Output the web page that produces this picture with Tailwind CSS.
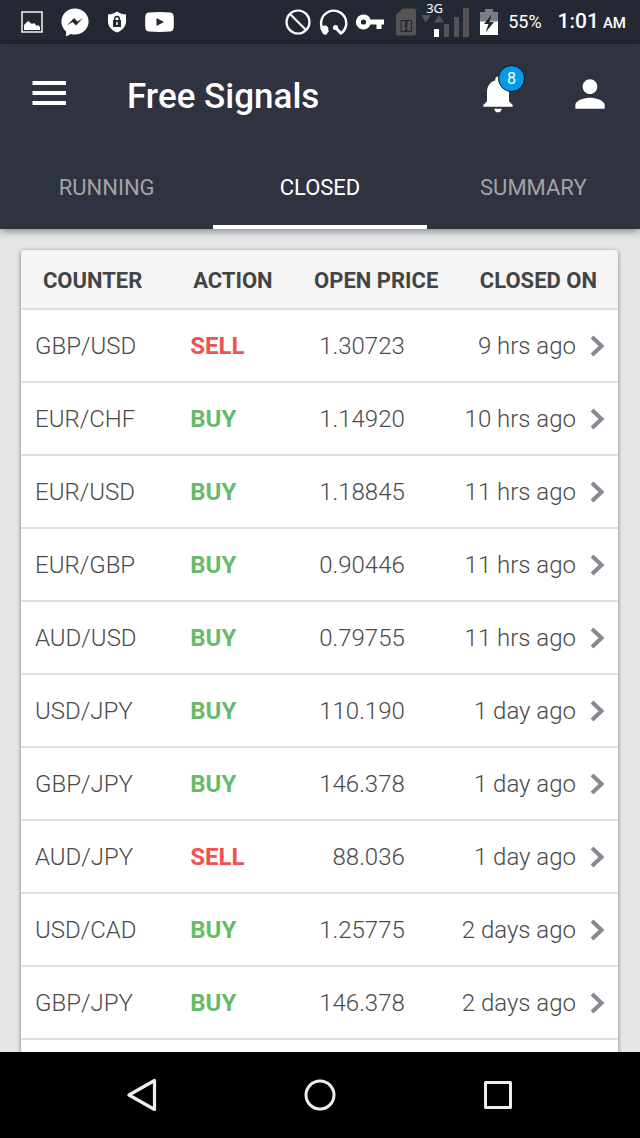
<!doctype html>
<html lang="en">

<head>
    <meta charset="UTF-8">
    <meta name="viewport" content="width=device-width, initial-scale=1.0">
    <title>Free Signals</title>
    <script src="https://cdn.jsdelivr.net/npm/@tailwindcss/browser@4"></script>
</head>

<body class="font-[Roboto,sans-serif]">

    <div class="flex h-screen flex-col overflow-hidden bg-[#e5e6e8]">

        <!-- Status bar -->
        <div class="flex h-11 shrink-0 items-center justify-between bg-[#242833] pr-3.5 pl-[21px] text-white">
            <div class="flex items-center gap-[18px]">
                <svg class="h-[22px] w-[22px]" viewBox="0 0 22 22" aria-hidden="true">
                    <rect x="1" y="1" width="20" height="20" fill="none" stroke="#e8e8e8" stroke-width="1.6" />
                    <path d="M3 19v-5l4-4 4 3 2-1 3 3 1-1 2 2v3z" fill="#fff" />
                </svg>
                <svg class="h-[29px] w-7" viewBox="0 0 28 29" aria-hidden="true">
                    <path d="M14 .5C6.400.5.4 6.200.4 13.600c0 4.200 1.900 7.700 4.700 9.900v5l4.800-2.600c1.300.4 2.700.6 4.100.6 7.600 0 13.600-5.800 13.600-13S21.600.5 14 .5z" fill="#fff" />
                    <path d="M6 17.500l7-7.500 3.500 3.500L22 10l-7 7.500-3.500-3.500z" fill="#242833" />
                </svg>
                <svg class="h-[22px] w-5" viewBox="0 0 20 22" aria-hidden="true">
                    <path d="M10 .5c3 2 6 2.800 9 3v7c0 5-4 9-9 11-5-2-9-6-9-11v-7c3-.2 6-1 9-3z" fill="#fff" />
                    <path d="M6 9h8v7H6z" fill="#242833" />
                    <path d="M7.700 9.500V7.800a2.300 2.300 0 0 1 4.600 0v1.700" fill="none" stroke="#242833" stroke-width="1.500" />
                    <path d="M10 11v3" stroke="#fff" stroke-width="1.500" />
                </svg>
                <svg class="h-5 w-[29px]" viewBox="0 0 29 20" aria-hidden="true">
                    <path d="M4 .5Q14.500-.3 25 .5q3.300.3 3.600 3.500.5 6 0 12-.3 3.200-3.600 3.500-10.500.8-21 0Q.7 19.200.4 16q-.5-6 0-12Q.7.8 4 .5z" fill="#fff" />
                    <path d="M11.500 6v8l7.500-4z" fill="#242833" />
                </svg>
            </div>

            <div class="flex items-center">
                <div class="flex items-center gap-2">
                    <svg class="h-[26px] w-[26px]" viewBox="0 0 26 26" fill="none" stroke="#fff" stroke-width="2.200" aria-hidden="true">
                        <circle cx="13" cy="13" r="11.500" />
                        <path d="M5 5l16 16" />
                    </svg>
                    <svg class="h-[26px] w-[29px]" viewBox="0 0 29 26" aria-hidden="true">
                        <path d="M3 19A12.600 12.600 0 1 1 22 24.500" fill="none" stroke="#fff" stroke-width="2.400" />
                        <path d="M1 19l4-2.500q4-.5 4.500 3.500l-.5 1 1 1-3 4-3-1z" fill="#fff" />
                        <circle cx="16.500" cy="18.500" r="2.600" fill="#fff" />
                        <path d="M16.500 18.500l6 6.500" stroke="#fff" stroke-width="3" />
                    </svg>
                    <svg class="h-4 w-7" viewBox="0 0 28 16" aria-hidden="true">
                        <path fill-rule="evenodd" d="M7.500.5a7.500 7.500 0 0 1 7 5H28v5h-2.500v4.500h-5v-4.500h-6A7.500 7.500 0 1 1 7.500.5zm0 4.900a2.600 2.600 0 1 0 0 5.200 2.600 2.600 0 0 0 0-5.200z" fill="#fff" />
                    </svg>
                </div>
                <svg class="ml-3 h-7 w-5" viewBox="0 0 20 28" aria-hidden="true">
                    <path d="M6.500.5H18q2 0 2 2v23q0 2-2 2H2q-2 0-2-2V7z" fill="#545454" />
                    <rect x="5" y="12.500" width="10.500" height="11" fill="none" stroke="#242833" />
                    <path d="M10.200 13v6.500m0 1.200v2.300" stroke="#242833" stroke-width="2.600" />
                </svg>
                <div class="relative ml-1 h-11 w-[50px]">
                    <svg class="h-11 w-[50px]" viewBox="0 0 50 44" aria-hidden="true">
                        <path d="M1 15h10l-5 7.500zM14 22.500h10L19 15z" fill="#545454" />
                        <path d="M24 24h5v13h-5zM34 17h5v20h-5zM43 8h6v29h-6z" fill="#545454" />
                        <path d="M14 29h5v8h-5z" fill="#fff" />
                    </svg>
                    <span class="absolute top-0 left-1.5 font-['Noto_Sans',sans-serif] text-[13px] leading-4">3G</span>
                </div>
                <svg class="ml-2.5 h-[26px] w-[18px]" viewBox="0 0 18 26" aria-hidden="true">
                    <path d="M5 0h8v3h5v10H0V3h5z" fill="#7b7d84" />
                    <path d="M0 12.500h18V26H0z" fill="#fff" />
                    <path d="M11.500 5.500L4 15h4.500l-3 8.500L14 13H9.500z" fill="#242833" />
                </svg>
                <div class="ml-2.5 flex items-baseline leading-11">
                    <span class="text-[18px]">55%</span>
                    <span class="ml-4 text-[21px] font-medium">1:01</span>
                    <span class="ml-1 text-[15px] font-medium">AM</span>
                </div>
            </div>
        </div>

        <!-- App bar and tabs -->
        <header class="relative shrink-0 bg-[#2f323f] text-white shadow-[0_2px_8px_rgba(0,0,0,0.45)]">
            <div class="flex h-[100px] items-center pr-7 pl-8">
                <button type="button" aria-label="Menu">
                    <svg class="block h-[26px] w-[34px]" viewBox="0 0 34 26" fill="#fff" aria-hidden="true">
                        <path d="M.5 0H34v4H.5zM.5 10H34v4H.5zM.5 20H34v4H.5z" />
                    </svg>
                </button>
                <h1 class="ml-[61px] flex-1 pt-1 text-[35px] leading-none font-medium">Free Signals</h1>
                <div class="flex gap-12">
                    <button type="button" class="relative" aria-label="Notifications">
                        <svg class="block size-11" viewBox="0 0 24 24" fill="#fff" aria-hidden="true">
                            <path d="M12 22c1.100 0 2-.9 2-2h-4c0 1.100.89 2 2 2zm6-6v-5c0-3.070-1.640-5.640-4.500-6.320V4c0-.83-.67-1.500-1.500-1.500s-1.500.67-1.500 1.500v.68C7.630 5.360 6 7.920 6 11v5l-2 2v1h16v-1l-2-2z" />
                        </svg>
                        <span class="absolute -top-[7px] left-[22px] flex size-[27px] items-center justify-center rounded-full border border-[#10131a] bg-[#039be5] text-[16px] leading-none">8</span>
                    </button>
                    <button type="button" aria-label="Profile">
                        <svg class="block size-11" viewBox="0 0 24 24" fill="#fff" aria-hidden="true">
                            <path d="M12 12c2.210 0 4-1.790 4-4s-1.790-4-4-4-4 1.790-4 4 1.790 4 4 4zm0 2c-2.670 0-8 1.340-8 4v2h16v-2c0-2.660-5.330-4-8-4z" />
                        </svg>
                    </button>
                </div>
            </div>
            <nav class="grid h-[85px] grid-cols-3 text-[22px] text-[#a3a3a5]">
                <a href="#running" class="flex items-center justify-center border-b-4 border-transparent pt-1.5">RUNNING</a>
                <a href="#closed" class="flex items-center justify-center border-b-4 border-white pt-1.5 text-white" aria-current="page">CLOSED</a>
                <a href="#summary" class="flex items-center justify-center border-b-4 border-transparent pt-1.5">SUMMARY</a>
            </nav>
        </header>

        <!-- Closed signals -->
        <main class="flex min-h-0 flex-1 flex-col overflow-hidden pt-[21px] pr-[22px] pl-[21px]">
            <div class="flex-1 rounded-t bg-white shadow-[0_1px_4px_rgba(0,0,0,0.5)]">
                <table class="w-full table-fixed text-[#4a4a4a]">
                    <thead>
                        <tr class="h-[59px] border-b-2 border-[#dedfe0] text-[22px] leading-7 text-[#444]">
                            <th class="w-[24%] rounded-tl bg-[#f5f5f5] pt-1 font-bold">COUNTER</th>
                            <th class="w-[23%] bg-[#f5f5f5] pt-1 font-bold">ACTION</th>
                            <th class="w-[25%] bg-[#f5f5f5] pt-1 font-bold whitespace-nowrap">OPEN PRICE</th>
                            <th class="w-[28%] rounded-tr bg-[#f5f5f5] pt-1 pl-2 font-bold whitespace-nowrap">CLOSED ON</th>
                        </tr>
                    </thead>
                    <tbody id="signals" class="text-[24px] leading-8 font-light"></tbody>
                </table>
            </div>
        </main>

        <!-- System navigation -->
        <div class="relative flex h-[86px] shrink-0 bg-black px-[53px]">
            <button type="button" class="flex flex-1 items-center justify-center" aria-label="Back">
                <svg class="h-[34px] w-[30px]" viewBox="0 0 30 34" fill="none" stroke="#eee" stroke-width="3.200" stroke-linejoin="round" aria-hidden="true">
                    <path d="M27.500 2.500v29L2 17z" />
                </svg>
            </button>
            <button type="button" class="flex flex-1 items-center justify-center" aria-label="Home">
                <svg class="size-8" viewBox="0 0 32 32" fill="none" stroke="#eee" stroke-width="3" aria-hidden="true">
                    <circle cx="16" cy="16" r="14" />
                </svg>
            </button>
            <button type="button" class="flex flex-1 items-center justify-center" aria-label="Recent apps">
                <svg class="size-[30px]" viewBox="0 0 30 30" fill="none" stroke="#eee" stroke-width="3" stroke-linejoin="round" aria-hidden="true">
                    <rect x="2.500" y="2.500" width="25" height="25" />
                </svg>
            </button>
        </div>
    </div>

    <script>
        const signals = [
            { counter: 'GBP/USD', action: 'SELL', price: '1.30723', closed: '9 hrs ago' },
            { counter: 'EUR/CHF', action: 'BUY', price: '1.14920', closed: '10 hrs ago' },
            { counter: 'EUR/USD', action: 'BUY', price: '1.18845', closed: '11 hrs ago' },
            { counter: 'EUR/GBP', action: 'BUY', price: '0.90446', closed: '11 hrs ago' },
            { counter: 'AUD/USD', action: 'BUY', price: '0.79755', closed: '11 hrs ago' },
            { counter: 'USD/JPY', action: 'BUY', price: '110.190', closed: '1 day ago' },
            { counter: 'GBP/JPY', action: 'BUY', price: '146.378', closed: '1 day ago' },
            { counter: 'AUD/JPY', action: 'SELL', price: '88.036', closed: '1 day ago' },
            { counter: 'USD/CAD', action: 'BUY', price: '1.25775', closed: '2 days ago' },
            { counter: 'GBP/JPY', action: 'BUY', price: '146.378', closed: '2 days ago' },
        ];

        document.getElementById('signals').innerHTML = signals.map((s) => `
            <tr class="h-[73px] border-b-2 border-[#dedfe0]">
                <td class="pl-3.5">${s.counter}</td>
                <td class="pl-[26px] font-bold ${s.action === 'SELL' ? 'text-[#ef5350]' : 'text-[#66bb6a]'}">${s.action}</td>
                <td class="pr-[46px] text-right">${s.price}</td>
                <td class="pr-3.5">
                    <a href="#signal" class="flex items-center justify-end gap-3.5 whitespace-nowrap">${s.closed}
                        <svg class="h-[22px] w-3.5" viewBox="0 0 14 22" fill="none" stroke="#858a91" stroke-width="4" aria-hidden="true">
                            <path d="M2 2l9.500 9L2 20" />
                        </svg>
                    </a>
                </td>
            </tr>`).join('');
    </script>
</body>

</html>
